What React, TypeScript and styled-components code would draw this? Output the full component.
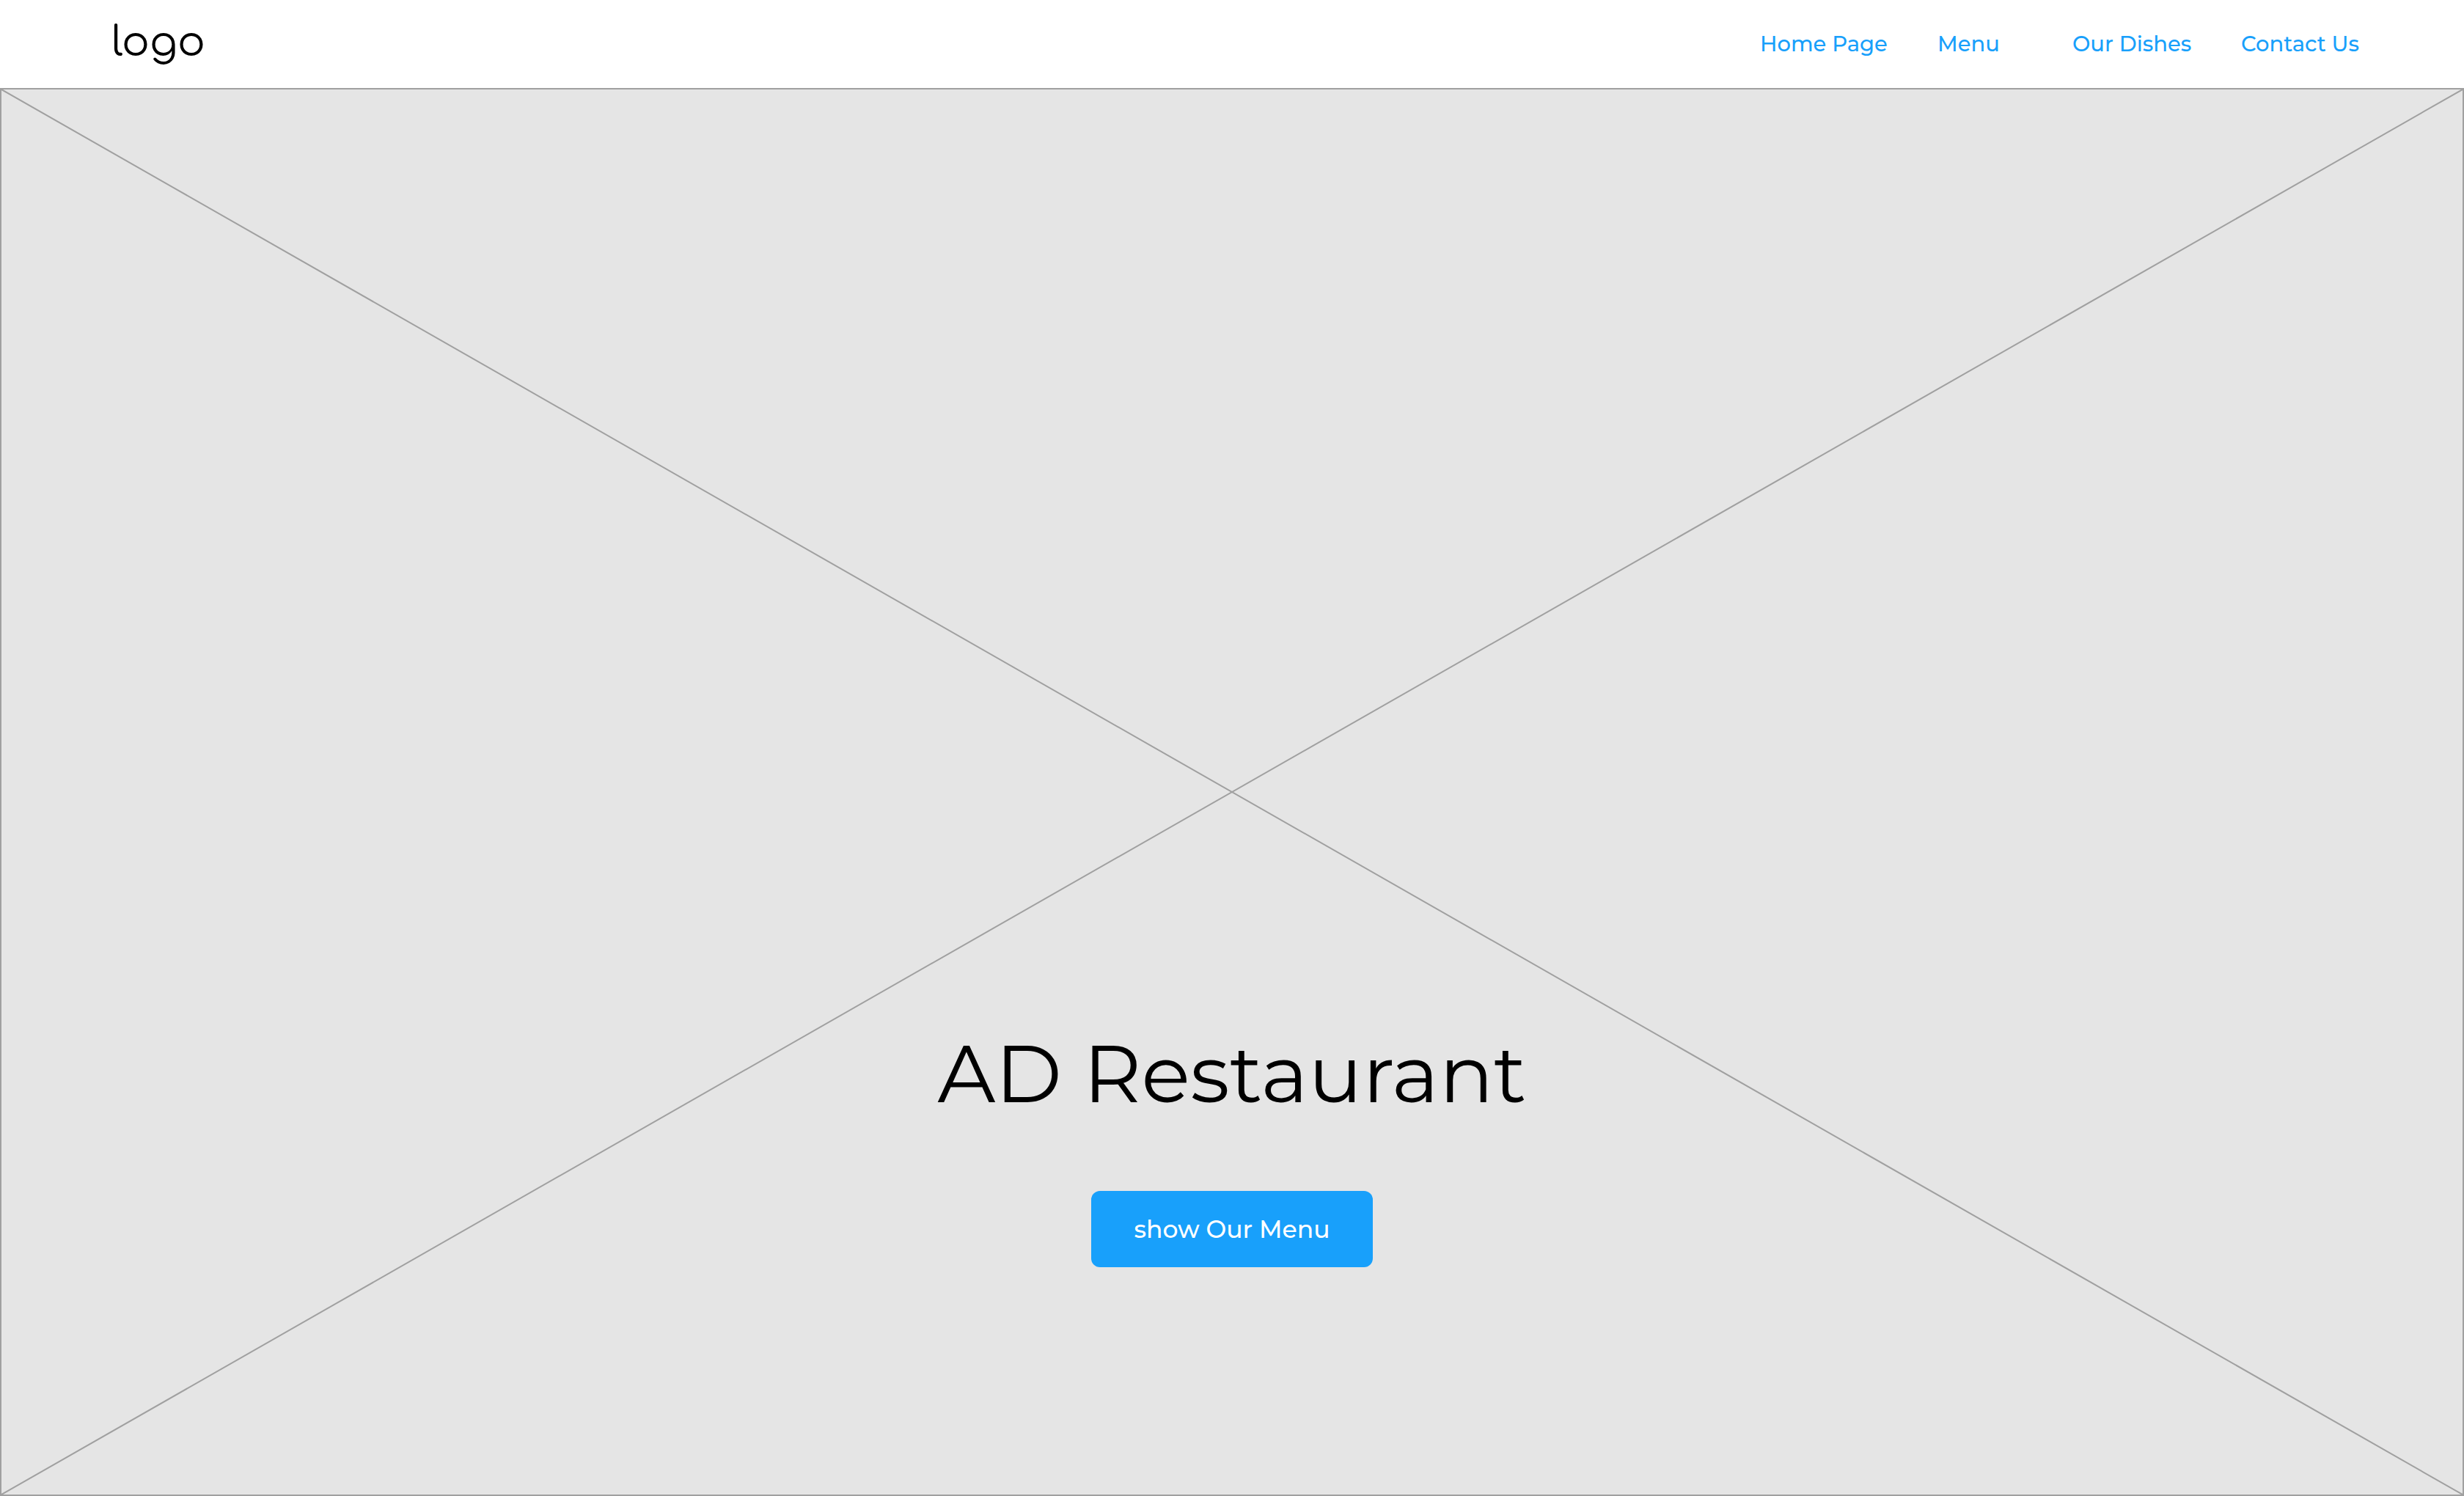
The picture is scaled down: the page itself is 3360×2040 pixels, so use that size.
import React from "react";
import styled, { createGlobalStyle } from "styled-components";

const colors = {
  accent: "#18a0fb",
  placeholder: "#e5e5e5",
  outline: "#a0a0a0",
};

const GlobalStyle = createGlobalStyle`
  *, *::before, *::after {
    box-sizing: border-box;
  }

  body {
    margin: 0;
    background: #ffffff;
    color: #000000;
    font-family: Montserrat, Inter, "Liberation Sans", sans-serif;
  }
`;

const Page = styled.div`
  display: flex;
  flex-direction: column;
  min-height: 100vh;
`;

const Header = styled.header`
  display: flex;
  align-items: center;
  justify-content: space-between;
  height: 120px;
  padding: 0 140px 0 152px;
`;

const Logo = styled.a`
  padding-bottom: 4px;
  color: #000000;
  font-family: Comfortaa, Quicksand, Lato, sans-serif;
  font-size: 56px;
  font-weight: 400;
  line-height: 80px;
  text-decoration: none;
`;

const Nav = styled.nav`
  display: flex;
  gap: 64px;
`;

const NavLink = styled.a<{ $width: number }>`
  min-width: ${({ $width }) => $width}px;
  color: ${colors.accent};
  font-size: 29px;
  font-weight: 500;
  line-height: 40px;
  text-decoration: none;
  white-space: nowrap;
`;

const Hero = styled.main`
  position: relative;
  display: flex;
  flex: 1;
  flex-direction: column;
  align-items: center;
  justify-content: flex-end;
  gap: 80px;
  padding-bottom: 310px;
  border: 2px solid ${colors.outline};
  background: ${colors.placeholder};
`;

const Diagonals = styled.svg`
  position: absolute;
  inset: 0;
  width: 100%;
  height: 100%;
`;

const Title = styled.h1`
  position: relative;
  margin: 0;
  font-size: 110px;
  font-weight: 400;
  line-height: 160px;
  text-align: center;
`;

const MenuButton = styled.button`
  position: relative;
  min-width: 384px;
  height: 104px;
  padding: 0 48px;
  border: 0;
  border-radius: 12px;
  background: ${colors.accent};
  color: #ffffff;
  font-family: inherit;
  font-size: 33px;
  font-weight: 500;
  line-height: 44px;
  cursor: pointer;
`;

const links = [
  { label: "Home Page", href: "#home", width: 178 },
  { label: "Menu", href: "#menu", width: 120 },
  { label: "Our Dishes", href: "#dishes", width: 166 },
  { label: "Contact Us", href: "#contact", width: 164 },
];

export default function App() {
  return (
    <Page>
      <GlobalStyle />
      <Header>
        <Logo href="#home">logo</Logo>
        <Nav>
          {links.map(({ label, href, width }) => (
            <NavLink key={href} href={href} $width={width}>
              {label}
            </NavLink>
          ))}
        </Nav>
      </Header>
      <Hero>
        <Diagonals viewBox="0 0 100 100" preserveAspectRatio="none" aria-hidden="true">
          <path
            d="M0 0 100 100M100 0 0 100"
            fill="none"
            stroke={colors.outline}
            strokeWidth="2"
            vectorEffect="non-scaling-stroke"
          />
        </Diagonals>
        <Title>AD Restaurant</Title>
        <MenuButton type="button">show Our Menu</MenuButton>
      </Hero>
    </Page>
  );
}
